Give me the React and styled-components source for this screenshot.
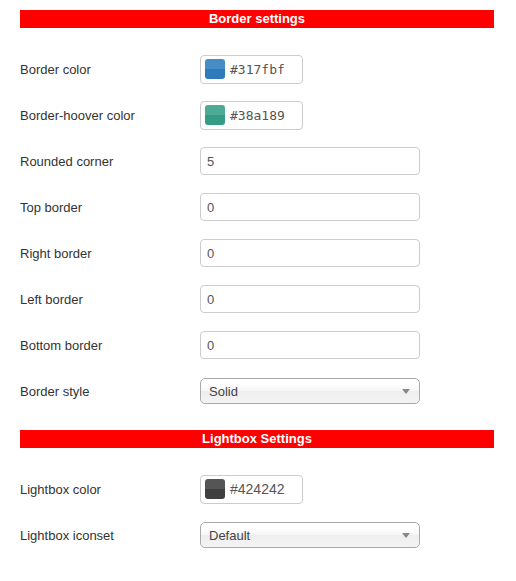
import styled, { createGlobalStyle } from "styled-components";

const Global = createGlobalStyle`
  body {
    margin: 0;
    background: #fff;
    font-family: "Liberation Sans", Arial, sans-serif;
  }
`;

const Page = styled.div`
  width: 516px;
  padding: 10px 22px 0 20px;
  box-sizing: border-box;
`;

const Section = styled.section`
  margin-bottom: 16px;
`;

const Header = styled.div`
  height: 18px;
  line-height: 18px;
  background: #ff0000;
  color: #fff;
  font-size: 13px;
  font-weight: bold;
  text-align: center;
`;

const Rows = styled.div`
  padding-top: 18px;
`;

const Row = styled.div`
  display: flex;
  align-items: center;
  height: 46px;
`;

const Label = styled.label`
  width: 180px;
  font-size: 13px;
  color: #333;
`;

const ColorBox = styled.div`
  display: flex;
  align-items: center;
  gap: 5px;
  width: 103px;
  height: 29px;
  box-sizing: border-box;
  padding-left: 4px;
  border: 1px solid #ccc;
  border-radius: 4px;
  background: #fff;
`;

const Swatch = styled.span`
  width: 20px;
  height: 20px;
  border-radius: 3px;
  background: linear-gradient(
    to bottom,
    rgba(255, 255, 255, 0.1) 0,
    rgba(255, 255, 255, 0.1) 50%,
    rgba(0, 0, 0, 0.04) 50%
  ),
    ${(p) => p.$color};
`;

const Hex = styled.span`
  color: #555;
  font-size: ${(p) => (p.$mono ? "13px" : "14px")};
  font-family: ${(p) => (p.$mono ? '"DejaVu Sans Mono", "Liberation Mono", monospace' : '"Liberation Sans", Arial, sans-serif')};
`;

const TextInput = styled.input`
  width: 220px;
  height: 28px;
  box-sizing: border-box;
  padding: 0 6px;
  border: 1px solid #ccc;
  border-radius: 4px;
  font-family: "Liberation Sans", Arial, sans-serif;
  font-size: 13px;
  color: #555;
  outline: none;
`;

const Select = styled.div`
  display: flex;
  align-items: center;
  justify-content: space-between;
  width: 220px;
  height: 26px;
  box-sizing: border-box;
  padding: 0 8px 0 8px;
  border: 1px solid #aaa;
  border-radius: 5px;
  background: linear-gradient(to bottom, #fff 20%, #f6f6f6 50%, #eee 52%, #f4f4f4 100%);
  font-size: 13px;
  color: #444;
`;

const Arrow = styled.span`
  width: 0;
  height: 0;
  border-left: 4px solid transparent;
  border-right: 4px solid transparent;
  border-top: 5px solid #888;
  margin-right: 1px;
`;

function ColorField({ color, mono }) {
  return (
    <ColorBox>
      <Swatch $color={color} />
      <Hex $mono={mono}>{color}</Hex>
    </ColorBox>
  );
}

function SelectField({ value }) {
  return (
    <Select>
      {value}
      <Arrow />
    </Select>
  );
}

const borderInputs = [
  ["Rounded corner", "5"],
  ["Top border", "0"],
  ["Right border", "0"],
  ["Left border", "0"],
  ["Bottom border", "0"],
];

export default function App() {
  return (
    <Page>
      <Global />
      <Section>
        <Header>Border settings</Header>
        <Rows>
          <Row>
            <Label>Border color</Label>
            <ColorField color="#317fbf" mono />
          </Row>
          <Row>
            <Label>Border-hoover color</Label>
            <ColorField color="#38a189" mono />
          </Row>
          {borderInputs.map(([label, value]) => (
            <Row key={label}>
              <Label>{label}</Label>
              <TextInput defaultValue={value} />
            </Row>
          ))}
          <Row>
            <Label>Border style</Label>
            <SelectField value="Solid" />
          </Row>
        </Rows>
      </Section>
      <Section>
        <Header>Lightbox Settings</Header>
        <Rows>
          <Row>
            <Label>Lightbox color</Label>
            <ColorField color="#424242" />
          </Row>
          <Row>
            <Label>Lightbox iconset</Label>
            <SelectField value="Default" />
          </Row>
        </Rows>
      </Section>
    </Page>
  );
}
